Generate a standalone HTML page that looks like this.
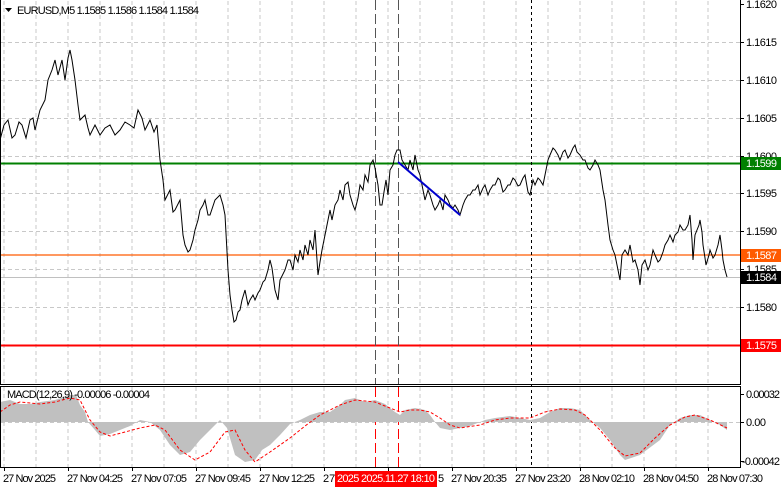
<!DOCTYPE html>
<html><head><meta charset="utf-8"><style>
html,body{margin:0;padding:0;background:#fff;width:781px;height:489px;overflow:hidden}
svg{display:block;font-family:"Liberation Sans",sans-serif;font-size:11px}
</style></head><body>
<svg width="781" height="489" viewBox="0 0 781 489">
<rect width="781" height="489" fill="#fff"/>
<g stroke="#c8c8c8" stroke-dasharray="4,3" stroke-width="1">
<path d="M4 1V384M36 1V384M68 1V384M100 1V384M132 1V384M164 1V384M196 1V384M228 1V384M260 1V384M292 1V384M324 1V384M356 1V384M388 1V384M420 1V384M452 1V384M484 1V384M516 1V384M548 1V384M580 1V384M612 1V384M644 1V384M676 1V384M708 1V384"/>
<path d="M1 42.5H740M1 80.5H740M1 118.5H740M1 156.5H740M1 193.5H740M1 231.5H740M1 269.5H740M1 307.5H740"/>
<path d="M4 387V467M36 387V467M68 387V467M100 387V467M132 387V467M164 387V467M196 387V467M228 387V467M260 387V467M292 387V467M324 387V467M356 387V467M388 387V467M420 387V467M452 387V467M484 387V467M516 387V467M548 387V467M580 387V467M612 387V467M644 387V467M676 387V467M708 387V467"/>
<path d="M1 422.5H740"/>
</g>
<line x1="1" y1="163.5" x2="740" y2="163.5" stroke="#008000" stroke-width="2"/>
<line x1="1" y1="255" x2="740" y2="255" stroke="#ff5a00" stroke-width="1.2"/>
<line x1="1" y1="277.5" x2="740" y2="277.5" stroke="#c0c0c0" stroke-width="1"/>
<line x1="1" y1="345.5" x2="740" y2="345.5" stroke="#ff0000" stroke-width="2"/>
<g stroke="#555" stroke-dasharray="10,4"><path d="M375.5 0V384M398.5 0V384"/></g>
<g stroke="#f00" stroke-dasharray="10,4"><path d="M375.5 387V467M398.5 387V467"/></g>
<path d="M531.5 0V467" stroke="#000" stroke-dasharray="3,3"/>
<polyline fill="none" stroke="#000" stroke-width="1" points="0,140 4,125 8,120 12,138 15,135 19,122 22,125 26,138 30,120 33,118 35,130 40,110 45,100 48,80 52,70 55,60 58,75 62,60 65,80 68,58 70,50 72,60 75,80 78,105 80,120 85,115 88,128 90,135 95,125 100,135 105,128 110,125 115,135 120,130 125,122 130,125 134,128 138,110 142,118 145,130 150,120 154,132 157,125 160,160 163,180 165,200 170,190 173,212 175,210 180,200 183,235 185,245 188,252 190,250 193,240 195,230 198,220 200,210 203,205 205,200 208,215 210,215 215,200 220,195 223,205 225,215 228,270 230,295 232,310 234,322 236,320 238,312 240,310 242,300 245,290 248,305 250,300 253,295 255,300 258,293 260,290 263,282 265,280 268,270 270,260 272,268 275,290 278,300 280,280 285,270 288,260 290,260 293,270 295,255 298,262 300,250 303,260 305,245 308,255 310,240 313,250 315,230 318,275 320,262 322,250 326,230 330,210 332,220 335,205 338,200 340,190 343,200 345,185 348,182 350,195 353,205 355,210 358,198 360,185 363,190 365,175 368,182 370,165 373,160 375,168 378,185 380,205 382,205 384,192 386,180 388,195 390,170 393,165 395,155 397,150 400,150 402,160 405,165 408,170 410,160 413,170 415,155 418,170 420,175 423,190 425,200 428,190 430,195 433,205 435,210 438,205 440,200 443,210 445,195 448,200 450,205 453,208 455,205 458,210 460,215 463,205 465,200 468,195 470,195 473,190 475,190 478,185 480,195 483,188 485,185 488,195 490,190 493,185 495,185 498,178 500,180 503,192 505,190 508,185 510,185 513,178 515,180 518,186 520,185 523,178 525,175 528,192 530,195 533,180 535,185 538,178 540,180 543,185 545,175 548,160 550,155 553,148 555,150 558,155 560,160 563,152 565,150 568,158 570,155 573,148 575,145 577,152 580,155 583,160 585,160 588,168 590,170 593,165 595,160 598,165 600,170 603,190 605,200 608,225 610,240 613,250 615,255 618,270 620,280 622,255 625,250 628,255 630,245 633,262 635,260 638,270 640,285 642,265 645,260 648,270 650,265 653,250 655,255 658,262 660,260 663,252 665,245 668,240 670,235 673,242 675,235 678,232 680,225 683,230 685,230 688,225 690,215 692,240 693,260 695,235 697,230 699,225 700,220 702,232 703,245 705,258 706,265 709,255 710,250 713,258 715,255 718,245 720,235 722,250 723,260 725,270 727,277"/>
<line x1="398" y1="162" x2="460" y2="215" stroke="#0000cd" stroke-width="2"/>
<polygon fill="#c0c0c0" points="0,422 0,402 10,400 20,404 30,404 40,402 55,400 70,395 76,395 80,405 85,412 88,422 95,430 100,436 110,434 120,430 130,426 140,420 150,422 160,430 170,445 180,455 190,452 200,440 210,430 220,420 227,428 235,455 245,462 255,460 262,450 270,445 280,435 290,424 300,420 310,415 320,412 330,412 340,405 345,400 355,398 365,402 375,400 385,404 395,412 400,415 405,410 415,408 425,410 430,415 435,422 440,428 450,430 460,428 470,426 480,422 485,420 495,418 510,416 520,418 530,420 540,418 550,412 560,408 570,408 580,410 590,420 600,428 610,440 620,455 625,460 640,455 660,440 670,425 680,418 690,415 700,415 710,420 720,425 727,430 727,422"/>
<polyline fill="none" stroke="#f00" stroke-dasharray="3,2" points="0,412 10,405 20,402 40,404 55,402 70,398 80,400 90,420 100,432 110,436 125,432 140,428 155,425 165,430 180,450 195,460 210,452 225,432 235,430 245,450 255,462 270,452 290,438 305,426 320,415 340,405 355,400 375,402 390,408 400,412 410,410 420,410 430,412 440,418 450,425 460,428 480,425 495,420 510,418 530,418 545,412 560,409 575,410 585,415 600,430 615,448 625,456 640,453 655,438 670,425 685,417 695,415 710,420 727,428"/>
<g fill="none" stroke="#000" stroke-width="1">
<path d="M0.5 0V384.5H740.5V0"/>
<path d="M0.5 386.5H740.5V467.5H0.5Z"/>
</g>
<g stroke="#000"><path d="M740 42.5h4M740 80.5h4M740 118.5h4M740 156.5h4M740 193.5h4M740 231.5h4M740 269.5h4M740 307.5h4M740 4.5h4M740 394.5h4M740 422.5h4M740 461.5h4"/>
<path d="M4.5 467v4M68.5 467v4M132.5 467v4M196.5 467v4M260.5 467v4M324.5 467v4M388.5 467v4M452.5 467v4M516.5 467v4M580.5 467v4M644.5 467v4M708.5 467v4"/></g>
<path d="M5 8h7l-3.5 4z" fill="#000"/>
<text x="17" y="14" fill="#000" textLength="182">EURUSD,M5  1.1585 1.1586 1.1584 1.1584</text>
<text x="7" y="398" fill="#000" textLength="143">MACD(12,26,9) -0.00006 -0.00004</text>
<g fill="#000">
<text x="746" y="8" textLength="31">1.1620</text><text x="746" y="46" textLength="31">1.1615</text><text x="746" y="84" textLength="31">1.1610</text><text x="746" y="122" textLength="31">1.1605</text><text x="746" y="160" textLength="31">1.1600</text><text x="746" y="197" textLength="31">1.1595</text><text x="746" y="235" textLength="31">1.1590</text><text x="746" y="273" textLength="31">1.1585</text><text x="746" y="311" textLength="31">1.1580</text>
<text x="746" y="398" textLength="34">0.00032</text><text x="746" y="426" textLength="20">0.00</text><text x="742" y="465" textLength="38">-0.00042</text>
</g>
<rect x="741" y="157" width="40" height="13" fill="#008000"/><text x="746" y="167" fill="#fff" textLength="31">1.1599</text>
<rect x="741" y="249" width="40" height="13" fill="#ff5a00"/><text x="746" y="259" fill="#fff" textLength="31">1.1587</text>
<rect x="741" y="271" width="40" height="13" fill="#000"/><text x="746" y="281" fill="#fff" textLength="31">1.1584</text>
<rect x="741" y="339" width="40" height="13" fill="#ff0000"/><text x="746" y="349" fill="#fff" textLength="31">1.1575</text>
<g fill="#000">
<text x="3" y="482" textLength="53">27 Nov 2025</text><text x="67" y="482" textLength="56">27 Nov 04:25</text><text x="131" y="482" textLength="56">27 Nov 07:05</text><text x="195" y="482" textLength="56">27 Nov 09:45</text><text x="259" y="482" textLength="56">27 Nov 12:25</text><text x="323" y="482">27</text><text x="451" y="482" textLength="56">27 Nov 20:35</text><text x="515" y="482" textLength="56">27 Nov 23:20</text><text x="579" y="482" textLength="56">28 Nov 02:10</text><text x="643" y="482" textLength="56">28 Nov 04:50</text><text x="707" y="482" textLength="56">28 Nov 07:30</text>
<text x="438" y="482">5</text>
</g>
<rect x="335" y="471" width="102" height="16" fill="#f00"/>
<text x="337" y="482" fill="#fff" textLength="98">2025 2025.11.27 18:10</text>
</svg>
</body></html>
